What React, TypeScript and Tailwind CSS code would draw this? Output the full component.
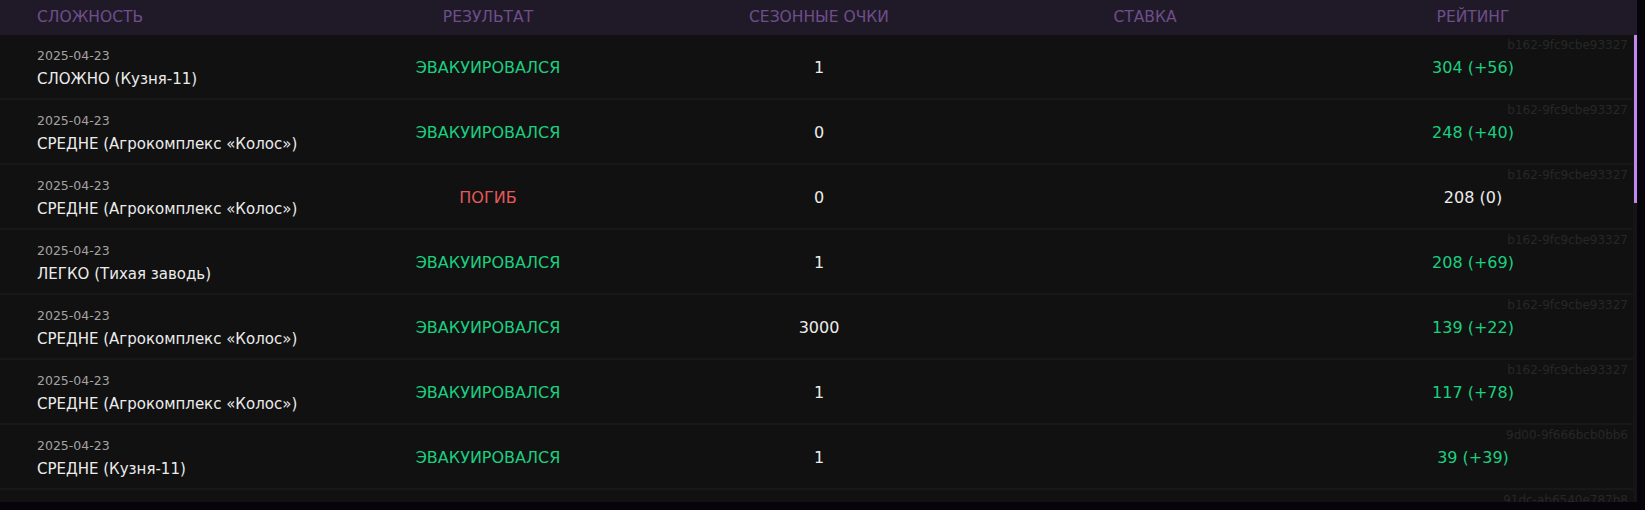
import React from "react";

type Match = {
  date: string;
  mode: string;
  result: "evac" | "dead";
  points: string;
  rating: string;
  delta: number;
  hash: string;
};

const matches: Match[] = [
  { date: "2025-04-23", mode: "СЛОЖНО (Кузня-11)", result: "evac", points: "1", rating: "304 (+56)", delta: 56, hash: "b162-9fc9cbe93327" },
  { date: "2025-04-23", mode: "СРЕДНЕ (Агрокомплекс «Колос»)", result: "evac", points: "0", rating: "248 (+40)", delta: 40, hash: "b162-9fc9cbe93327" },
  { date: "2025-04-23", mode: "СРЕДНЕ (Агрокомплекс «Колос»)", result: "dead", points: "0", rating: "208 (0)", delta: 0, hash: "b162-9fc9cbe93327" },
  { date: "2025-04-23", mode: "ЛЕГКО (Тихая заводь)", result: "evac", points: "1", rating: "208 (+69)", delta: 69, hash: "b162-9fc9cbe93327" },
  { date: "2025-04-23", mode: "СРЕДНЕ (Агрокомплекс «Колос»)", result: "evac", points: "3000", rating: "139 (+22)", delta: 22, hash: "b162-9fc9cbe93327" },
  { date: "2025-04-23", mode: "СРЕДНЕ (Агрокомплекс «Колос»)", result: "evac", points: "1", rating: "117 (+78)", delta: 78, hash: "b162-9fc9cbe93327" },
  { date: "2025-04-23", mode: "СРЕДНЕ (Кузня-11)", result: "evac", points: "1", rating: "39 (+39)", delta: 39, hash: "9d00-9f666bcb0bb6" },
  { date: "2025-04-22", mode: "ЛЕГКО (Тихая заводь)", result: "evac", points: "0", rating: "0 (0)", delta: 0, hash: "91dc-ab6540e787b8" },
];

const cols = "grid grid-cols-[300px_376px_286px_366px_290px]";

function Row({ m }: { m: Match }) {
  return (
    <div className={`${cols} relative h-[65px] items-center border-b-2 border-[#181818] bg-[#111111] pt-[3px]`}>
      <span className="absolute right-[5px] top-[1px] text-[12px] leading-[18px] text-[#272727]">{m.hash}</span>
      <div className="pl-[37px] flex flex-col gap-[5px] whitespace-nowrap">
        <span className="text-[12.5px] leading-[16px] text-[#a3a3a3]">{m.date}</span>
        <span className="text-[15px] leading-[20px] text-[#ececec]">{m.mode}</span>
      </div>
      <div className="text-center text-[16px]">
        {m.result === "evac" ? (
          <span className="text-[#1bcf80]">ЭВАКУИРОВАЛСЯ</span>
        ) : (
          <span className="text-[#e25a5c]">ПОГИБ</span>
        )}
      </div>
      <div className="text-center text-[16px] text-[#ececec]">{m.points}</div>
      <div />
      <div className="text-center text-[16px]">
        <span className={m.delta > 0 ? "text-[#1bcf80]" : "text-[#ececec]"}>{m.rating}</span>
      </div>
    </div>
  );
}

export default function App() {
  return (
    <div className="h-[510px] w-[1645px] overflow-hidden bg-[#07050b] font-['DejaVu_Sans',sans-serif]">
      <div className="h-[502px] w-[1637px] flex flex-col">
        <div className={`${cols} h-[35px] shrink-0 items-center bg-[#201a28] text-[15.5px] text-[#6e4e8b]`}>
          <div className="pl-[37px]">СЛОЖНОСТЬ</div>
          <div className="text-center">РЕЗУЛЬТАТ</div>
          <div className="text-center">СЕЗОННЫЕ ОЧКИ</div>
          <div className="text-center">СТАВКА</div>
          <div className="text-center">РЕЙТИНГ</div>
        </div>
        <div className="relative flex-1 overflow-hidden bg-[#111111]">
          <div className="pr-[4px]">
            {matches.map((m, i) => (
              <Row key={i} m={m} />
            ))}
          </div>
          <div className="absolute right-0 top-0 h-full w-[4px] bg-[#151515]" />
          <div className="absolute right-0 top-0 h-[168px] w-[3px] bg-[#c288f2]" />
        </div>
      </div>
    </div>
  );
}
